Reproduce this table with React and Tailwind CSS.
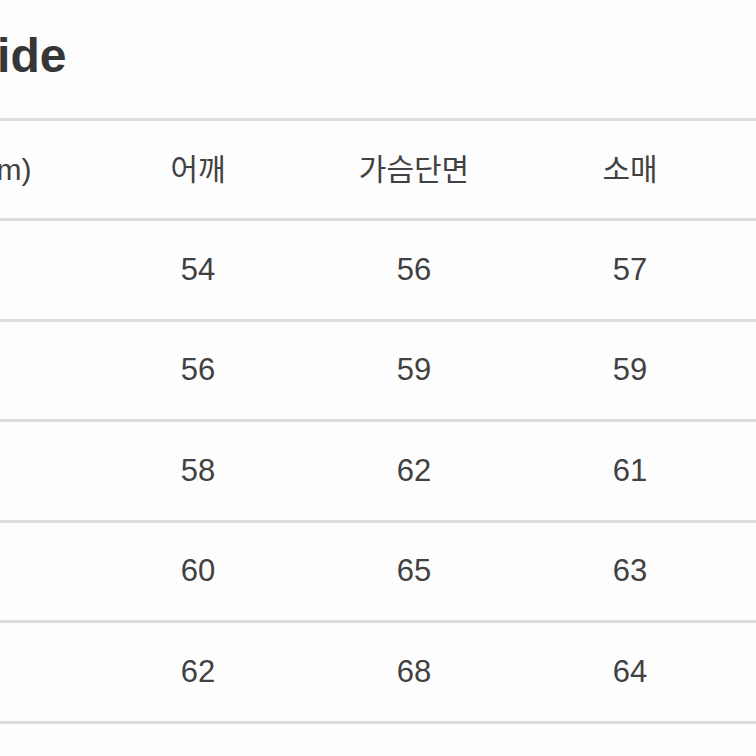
const headers = ['사이즈(cm)', '어깨', '가슴단면', '소매', '총장'];

const rows = [
  { size: 'S', values: [54, 56, 57, 70], h: 'h-[101px]' },
  { size: 'M', values: [56, 59, 59, 72], h: 'h-[100px]' },
  { size: 'L', values: [58, 62, 61, 74], h: 'h-[101px]' },
  { size: 'XL', values: [60, 65, 63, 76], h: 'h-[100px]' },
  { size: 'XXL', values: [62, 68, 64, 78], h: 'h-[101px]' },
];

const App = () => {
  return (
    <div
      className="w-[756px] h-[756px] overflow-hidden bg-[#fdfdfd] text-[#414141]"
      style={{ fontFamily: '"Liberation Sans", Arial, "Noto Sans CJK KR", sans-serif' }}
    >
      {/* Title */}
      <div className="pt-[32px] ml-[-179px] h-[118px]">
        <h2 className="text-[48px] leading-[48px] font-bold text-[#363636] whitespace-nowrap">Size Guide</h2>
      </div>

      {/* Table */}
      <div className="ml-[-169px] w-[1100px]">
        <div className="border-t-[3px] border-b-[3px] border-[#dddddd] grid grid-cols-[260px_216px_216px_216px_216px] h-[103px] items-center text-[30px] text-center">
          {headers.map((h, i) => (
            <div key={h} className={i === 0 ? 'whitespace-nowrap ml-[-2px]' : 'whitespace-nowrap ml-[-2px]'}>{h}</div>
          ))}
        </div>
        {rows.map((row) => (
          <div
            key={row.size}
            className={`border-b-[3px] border-[#dddddd] grid grid-cols-[260px_216px_216px_216px_216px] ${row.h} items-center text-[31px] text-center`}
          >
            <div className="ml-[-2px]">{row.size}</div>
            {row.values.map((v, i) => (
              <div key={i} className="ml-[-2px]">{v}</div>
            ))}
          </div>
        ))}
      </div>
    </div>
  );
};

export default App;
